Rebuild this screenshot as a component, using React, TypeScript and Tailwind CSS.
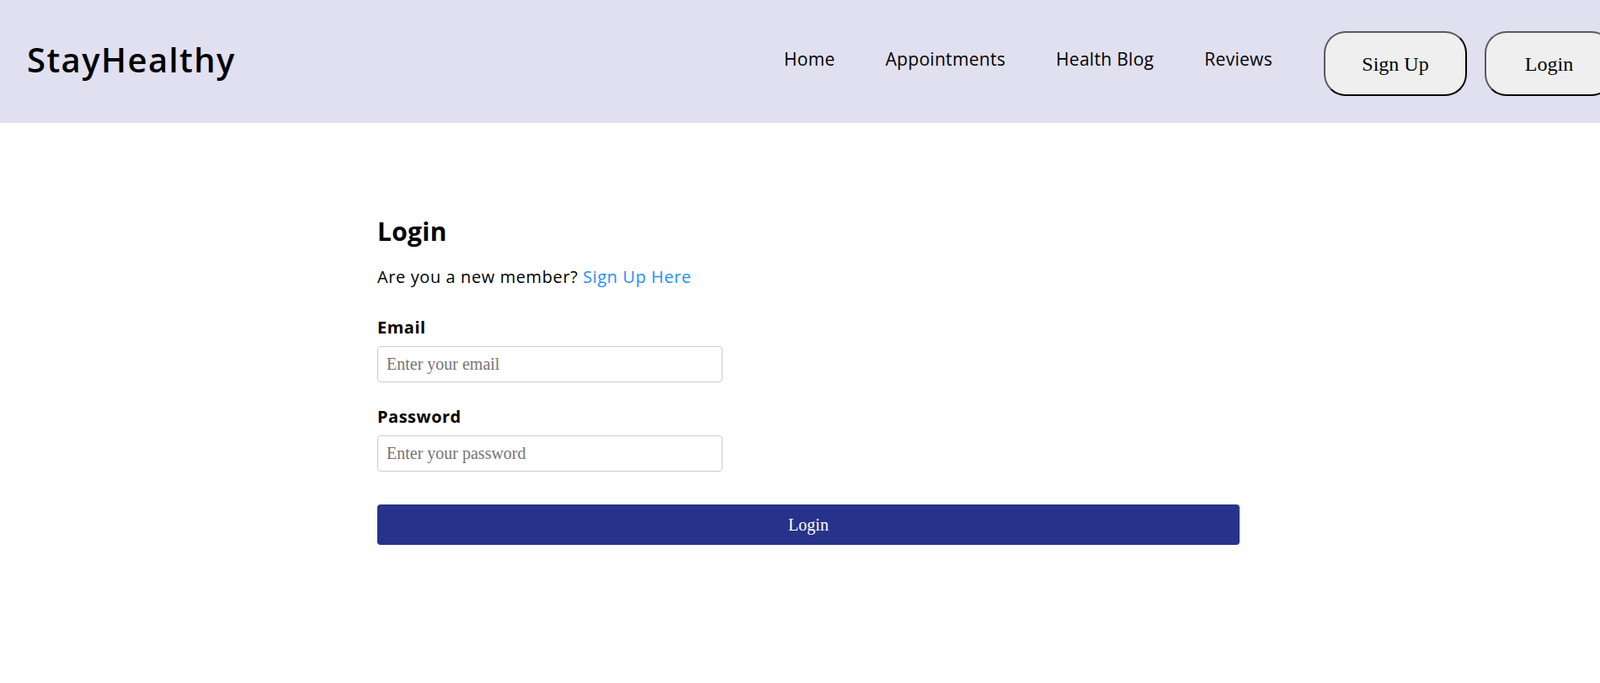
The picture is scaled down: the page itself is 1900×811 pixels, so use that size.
export default function App() {
  return (
    <div className="min-h-[811px] w-full overflow-hidden bg-white font-['Open_Sans',sans-serif] text-black">
      <header className="flex h-[146px] items-center bg-[#e1e0f0] pl-[32px]">
        <div className="shrink-0 pb-[5px] text-[40px] font-semibold leading-[44px] tracking-[1.4px]">StayHealthy</div>
        <div className="ml-auto mr-[-16px] flex shrink-0 items-center gap-[61px]">
          <nav className="flex items-center gap-[60px] pb-[4px] text-[21px] font-medium tracking-[0.3px]">
            <a>Home</a>
            <a>Appointments</a>
            <a>Health Blog</a>
            <a>Reviews</a>
          </nav>
          <div className="mt-[5px] flex items-center gap-[21px] font-['Liberation_Serif',serif] text-[24px]">
            <button className="h-[77px] w-[170px] rounded-[26px] border-2 border-[#5a5a5a] border-b-black border-r-black bg-[#efefef]">
              Sign Up
            </button>
            <button className="h-[77px] w-[153px] rounded-[26px] border-2 border-[#5a5a5a] border-b-black border-r-black bg-[#efefef]">
              Login
            </button>
          </div>
        </div>
      </header>
      <main className="ml-[448px] w-[1024px] pt-[111px]">
        <h2 className="text-[30px] font-bold leading-[36px] tracking-[0.3px]">Login</h2>
        <p className="mt-[23px] text-[20px] leading-[26px] tracking-[0.6px]">
          Are you a new member? <a className="text-[#1e90ff]">Sign Up Here</a>
        </p>
        <form className="mt-[34px]">
          <label className="block text-[20px] font-bold leading-[26px] tracking-[0.5px]">Email</label>
          <input
            type="email"
            placeholder="Enter your email"
            className="mt-[9px] block h-[43px] w-[410px] rounded-[4px] border border-[#cccccc] px-[10px] font-['Liberation_Serif',serif] text-[20px] placeholder:text-[#757575]"
          />
          <label className="mt-[28px] block text-[20px] font-bold leading-[26px] tracking-[0.5px]">Password</label>
          <input
            type="password"
            placeholder="Enter your password"
            className="mt-[9px] block h-[43px] w-[410px] rounded-[4px] border border-[#cccccc] px-[10px] font-['Liberation_Serif',serif] text-[20px] placeholder:text-[#757575]"
          />
          <button
            type="button"
            className="mt-[39px] block h-[48px] w-[1024px] rounded-[4px] bg-[#27338a] font-['Liberation_Serif',serif] text-[20px] text-white"
          >
            Login
          </button>
        </form>
      </main>
    </div>
  );
}
